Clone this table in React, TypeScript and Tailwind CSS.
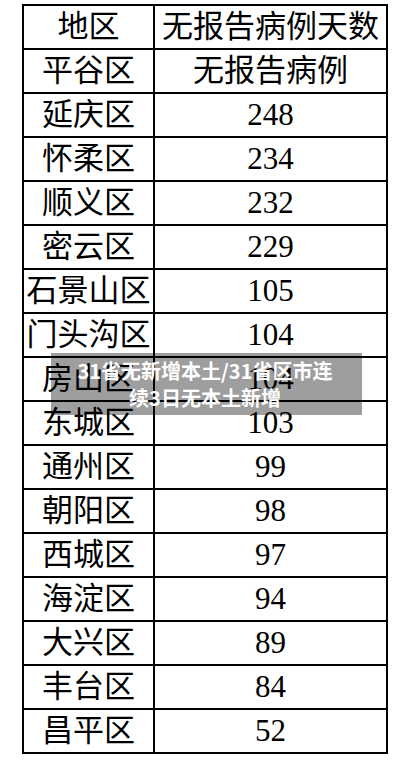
import React from "react";

const rows: [string, string][] = [
  ["平谷区", "无报告病例"],
  ["延庆区", "248"],
  ["怀柔区", "234"],
  ["顺义区", "232"],
  ["密云区", "229"],
  ["石景山区", "105"],
  ["门头沟区", "104"],
  ["房山区", "104"],
  ["东城区", "103"],
  ["通州区", "99"],
  ["朝阳区", "98"],
  ["西城区", "97"],
  ["海淀区", "94"],
  ["大兴区", "89"],
  ["丰台区", "84"],
  ["昌平区", "52"],
];

const font = {
  fontFamily: '"Liberation Serif", "Noto Sans CJK SC", serif',
};

export default function App() {
  return (
    <div className="relative w-[415px] h-[769px] bg-white overflow-hidden">
      <div className="pt-[4px] pl-[22px]">
        <div
          className="w-[366px] border-2 border-black text-black text-[31px] leading-[42px]"
          style={font}
        >
          <div className="flex h-[42px]">
            <div className="w-[131px] shrink-0 border-r-2 border-black text-center whitespace-nowrap">
              地区
            </div>
            <div className="flex-1 text-center whitespace-nowrap">
              无报告病例天数
            </div>
          </div>
          {rows.map(([a, b]) => (
            <div key={a} className="flex h-[44px] border-t-2 border-black">
              <div className="w-[131px] shrink-0 border-r-2 border-black text-center whitespace-nowrap">
                {a}
              </div>
              <div className="flex-1 text-center whitespace-nowrap">{b}</div>
            </div>
          ))}
        </div>
      </div>
      <div className="absolute left-[51px] top-[353px] w-[311px] h-[62px] bg-[rgba(0,0,0,0.38)] pt-[4px] pr-[3px]">
        <div
          className="text-white font-bold text-[20px] leading-[27px] text-center whitespace-nowrap"
          style={{ fontFamily: '"Noto Sans CJK SC", "Noto Sans", sans-serif' }}
        >
          31省无新增本土/31省区市连
          <br />
          续3日无本土新增
        </div>
      </div>
    </div>
  );
}
